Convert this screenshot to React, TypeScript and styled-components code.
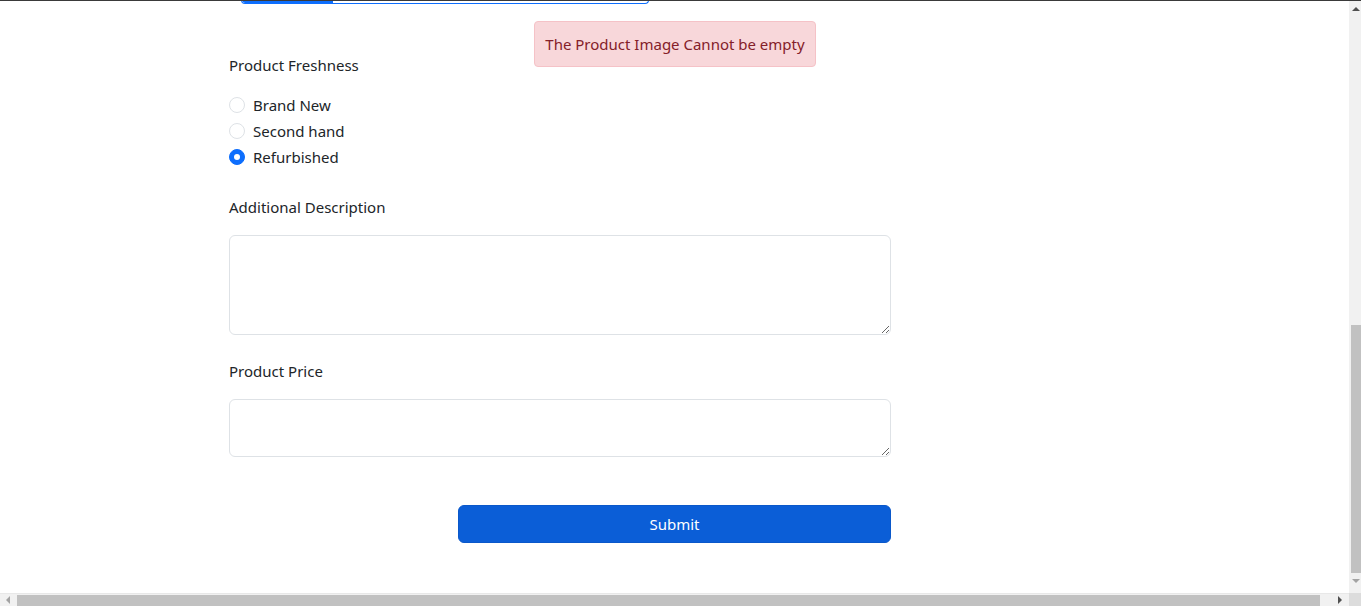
import React from "react";
import styled, { createGlobalStyle } from "styled-components";

const GlobalStyle = createGlobalStyle`
  html, body { margin: 0; padding: 0; background: #fff; }
  body {
    font-family: "Noto Sans", "Open Sans", sans-serif;
    font-size: 15px;
    color: #212529;
    overflow: hidden;
  }
  * { box-sizing: border-box; }
`;

const Page = styled.div`
  position: relative;
  width: 1361px;
  height: 606px;
  overflow: hidden;
  padding-right: 12px;
`;

const TopLine = styled.div`
  position: absolute;
  left: 0;
  top: 0;
  width: 100%;
  height: 1px;
  background: #3a3a3a;
  z-index: 5;
`;

const ProgressStub = styled.div`
  margin-left: 241px;
  width: 408px;
  height: 4px;
  border: 1px solid #0d6efd;
  border-top: none;
  border-radius: 0 0 5px 5px;
  overflow: hidden;
  display: flex;
`;

const ProgressFill = styled.div`
  height: 100%;
  background: #0d6efd;
  border-radius: 0 0 0 5px;
`;

const Alert = styled.div`
  position: absolute;
  top: 21px;
  left: 534px;
  width: 282px;
  height: 46px;
  display: flex;
  align-items: center;
  justify-content: center;
  background: #f8d7da;
  border: 1px solid #f5c2c7;
  border-radius: 4px;
  color: #842029;
  line-height: 24px;
`;

const Form = styled.form`
  margin-left: 229px;
  width: 662px;
  display: flex;
  flex-direction: column;
`;

const Label = styled.div<{ $top: number; $bottom: number }>`
  line-height: 24px;
  margin-top: ${(p) => p.$top}px;
  margin-bottom: ${(p) => p.$bottom}px;
`;

const RadioGroup = styled.div`
  display: flex;
  flex-direction: column;
  gap: 2px;
`;

const RadioRow = styled.label`
  display: flex;
  align-items: center;
  gap: 8px;
  height: 24px;
  line-height: 24px;
`;

const RadioDot = styled.span<{ $checked?: boolean }>`
  width: 16px;
  height: 16px;
  border-radius: 50%;
  border: 1px solid ${(p) => (p.$checked ? "#0d6efd" : "#dee2e6")};
  background: ${(p) => (p.$checked ? "#0d6efd" : "#fff")};
  display: flex;
  align-items: center;
  justify-content: center;
  &::after {
    content: "";
    display: ${(p) => (p.$checked ? "block" : "none")};
    width: 6px;
    height: 6px;
    border-radius: 50%;
    background: #fff;
  }
`;

const TextArea = styled.textarea<{ $h: number }>`
  display: block;
  width: 662px;
  height: ${(p) => p.$h}px;
  border: 1px solid #dee2e6;
  border-radius: 6px;
  padding: 6px 12px;
  font: inherit;
  resize: vertical;
  outline: none;
`;

const ButtonRow = styled.div`
  margin-top: 48px;
  display: flex;
  justify-content: center;
  width: 1349px;
  margin-left: -229px;
`;

const SubmitButton = styled.button`
  width: 433px;
  height: 38px;
  background: #0b5ed7;
  color: #fff;
  border: 1px solid #0a58ca;
  border-radius: 6px;
  font: inherit;
  line-height: 24px;
`;

const VScroll = styled.div`
  position: absolute;
  right: 0;
  top: 0;
  width: 12px;
  height: 593px;
  background: #f1f1f1;
`;

const VThumb = styled.div`
  position: absolute;
  left: 2px;
  right: 0;
  top: 325px;
  height: 248px;
  background: #c1c1c1;
`;

const HScroll = styled.div`
  position: absolute;
  left: 0;
  bottom: 0;
  width: 1349px;
  height: 13px;
  background: #f1f1f1;
  border-top: 1px solid #e8e8e8;
`;

const HThumb = styled.div`
  position: absolute;
  left: 17px;
  top: 1px;
  width: 1303px;
  bottom: 0;
  background: #c1c1c1;
`;

const Corner = styled.div`
  position: absolute;
  right: 0;
  bottom: 0;
  width: 12px;
  height: 13px;
  background: #dcdcdc;
`;

const Arrow = styled.svg`
  position: absolute;
`;

export default function App() {
  return (
    <Page>
      <GlobalStyle />
      <TopLine />
      <ProgressStub>
        <ProgressFill style={{ width: "91px" }} />
      </ProgressStub>
      <Alert>The Product Image Cannot be empty</Alert>
      <Form onSubmit={(e) => e.preventDefault()}>
        <Label $top={49} $bottom={16}>Product Freshness</Label>
        <RadioGroup>
          <RadioRow>
            <RadioDot />
            Brand New
          </RadioRow>
          <RadioRow>
            <RadioDot />
            Second hand
          </RadioRow>
          <RadioRow>
            <RadioDot $checked />
            Refurbished
          </RadioRow>
        </RadioGroup>
        <Label $top={26} $bottom={16}>Additional Description</Label>
        <TextArea $h={100} />
        <Label $top={24} $bottom={16}>Product Price</Label>
        <TextArea $h={58} />
        <ButtonRow>
          <SubmitButton type="submit">Submit</SubmitButton>
        </ButtonRow>
      </Form>
      <VScroll>
        <Arrow width="12" height="12" style={{ top: 3, left: 1 }} viewBox="0 0 12 12">
          <path d="M2 8 L6 4 L10 8 Z" fill="#505050" />
        </Arrow>
        <VThumb />
        <Arrow width="12" height="12" style={{ top: 575, left: 1 }} viewBox="0 0 12 12">
          <path d="M2 4 L10 4 L6 8 Z" fill="#a3a3a3" />
        </Arrow>
      </VScroll>
      <HScroll>
        <Arrow width="12" height="12" style={{ top: 0, left: 2 }} viewBox="0 0 12 12">
          <path d="M8 2 L8 10 L4 6 Z" fill="#a3a3a3" />
        </Arrow>
        <HThumb />
        <Arrow width="12" height="12" style={{ top: 0, left: 1334 }} viewBox="0 0 12 12">
          <path d="M4 2 L4 10 L8 6 Z" fill="#505050" />
        </Arrow>
      </HScroll>
      <Corner />
    </Page>
  );
}
